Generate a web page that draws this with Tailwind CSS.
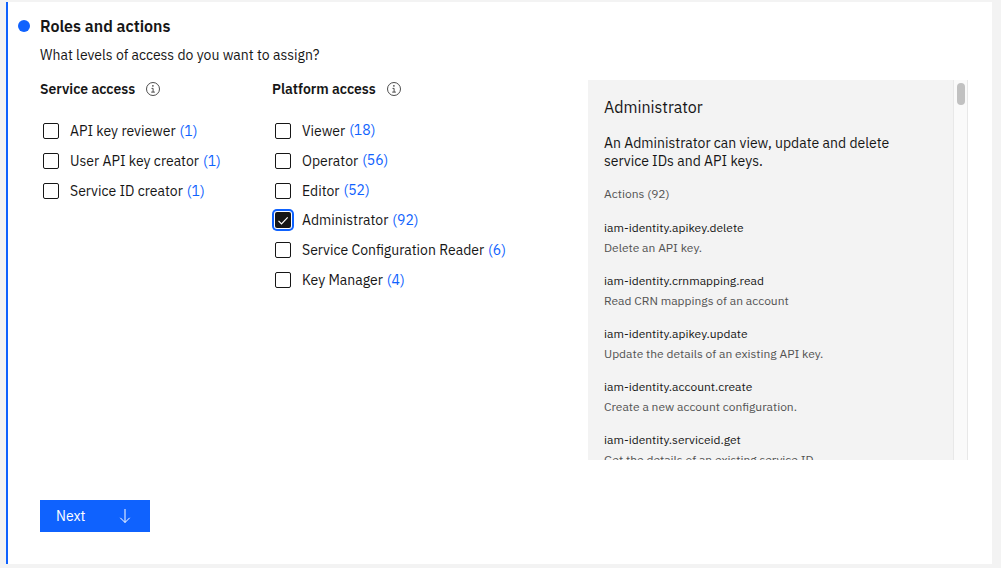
<!DOCTYPE html>
<html lang="en">
<head>
<meta charset="utf-8">
<meta name="viewport" content="width=device-width, initial-scale=1">
<title>Roles and actions</title>
<script src="https://cdn.jsdelivr.net/npm/@tailwindcss/browser@4"></script>
</head>
<body class="min-h-screen flex bg-[#f3f3f3] pt-[2px] pr-[9px] pb-1 pl-[6px] font-['IBM_Plex_Sans',Roboto,sans-serif] text-sm text-[#161616]">
<main class="flex-1 bg-white border-l-2 border-[#0f62fe] pl-8 pr-6 pt-3">
  <header>
    <div class="flex items-center gap-[10px] -ml-[22px]">
      <span class="size-3 rounded-full bg-[#0f62fe]"></span>
      <h1 class="text-base leading-6 font-semibold">Roles and actions</h1>
    </div>
    <p class="mt-[7px] leading-5">What levels of access do you want to assign?</p>
  </header>

  <div class="mt-[15px] grid grid-cols-[232fr_316fr_380fr] items-start">
    <section>
      <div class="flex items-center gap-[10px] h-[18px]">
        <h2 class="font-semibold">Service access</h2>
        <button type="button" aria-label="About service access" class="pb-px">
          <svg class="size-4 block" viewBox="0 0 16 16" fill="none" stroke="#393939" stroke-width="0.9"><circle cx="8" cy="8" r="6.500"/><path d="M6.500 7.400h1.600v3.700M6.200 11.100h3.700"/><circle cx="7.900" cy="4.900" r="0.800" fill="#393939" stroke="none"/></svg>
        </button>
      </div>
      <ul class="mt-[18px] h-[90px] grid auto-rows-fr pl-[3px]">
        <li class="flex items-center gap-1"><input id="s1" type="checkbox" class="appearance-none size-4 border border-[#161616] rounded-xs"><label for="s1" class="pl-[7px]">API key reviewer</label><a href="#" class="text-[#0f62fe] pb-px">(1)</a></li>
        <li class="flex items-center gap-1"><input id="s2" type="checkbox" class="appearance-none size-4 border border-[#161616] rounded-xs"><label for="s2" class="pl-[7px]">User API key creator</label><a href="#" class="text-[#0f62fe] pb-px">(1)</a></li>
        <li class="flex items-center gap-1"><input id="s3" type="checkbox" class="appearance-none size-4 border border-[#161616] rounded-xs"><label for="s3" class="pl-[7px]">Service ID creator</label><a href="#" class="text-[#0f62fe] pb-px">(1)</a></li>
      </ul>
    </section>

    <section>
      <div class="flex items-center gap-[10px] h-[18px]">
        <h2 class="font-semibold">Platform access</h2>
        <button type="button" aria-label="About platform access" class="pb-px">
          <svg class="size-4 block" viewBox="0 0 16 16" fill="none" stroke="#393939" stroke-width="0.9"><circle cx="8" cy="8" r="6.500"/><path d="M6.500 7.400h1.600v3.700M6.200 11.100h3.700"/><circle cx="7.900" cy="4.900" r="0.800" fill="#393939" stroke="none"/></svg>
        </button>
      </div>
      <ul class="mt-[18px] h-[179px] grid auto-rows-fr pl-[3px]">
        <li class="flex items-center gap-1"><input id="p1" type="checkbox" class="appearance-none size-4 border border-[#161616] rounded-xs"><label for="p1" class="pl-[7px]">Viewer</label><a href="#" class="text-[#0f62fe] pb-px">(18)</a></li>
        <li class="flex items-center gap-1"><input id="p2" type="checkbox" class="appearance-none size-4 border border-[#161616] rounded-xs"><label for="p2" class="pl-[7px]">Operator</label><a href="#" class="text-[#0f62fe] pb-px">(56)</a></li>
        <li class="flex items-center gap-1"><input id="p3" type="checkbox" class="appearance-none size-4 border border-[#161616] rounded-xs"><label for="p3" class="pl-[7px]">Editor</label><a href="#" class="text-[#0f62fe] pb-px">(52)</a></li>
        <li class="flex items-center gap-1">
          <span class="relative size-4">
            <input id="p4" type="checkbox" checked class="block appearance-none size-4 bg-[#161616] rounded-xs ring-2 ring-[#0f62fe] ring-offset-1">
            <svg class="absolute inset-0 size-4 pointer-events-none" viewBox="0 0 16 16" fill="none" stroke="#fff" stroke-width="1.2"><path d="M3.500 8.800l3 3 6.200-6.500"/></svg>
          </span>
          <label for="p4" class="pl-[7px]">Administrator</label><a href="#" class="text-[#0f62fe] pb-px">(92)</a></li>
        <li class="flex items-center gap-1"><input id="p5" type="checkbox" class="appearance-none size-4 border border-[#161616] rounded-xs"><label for="p5" class="pl-[7px]">Service Configuration Reader</label><a href="#" class="text-[#0f62fe] pb-px">(6)</a></li>
        <li class="flex items-center gap-1"><input id="p6" type="checkbox" class="appearance-none size-4 border border-[#161616] rounded-xs"><label for="p6" class="pl-[7px]">Key Manager</label><a href="#" class="text-[#0f62fe] pb-px">(4)</a></li>
      </ul>
    </section>

    <aside class="flex h-[380px] overflow-hidden bg-[#f3f3f3]">
      <div class="flex-1 px-4 pt-4">
        <h2 class="text-base leading-[22px]">Administrator</h2>
        <p class="mt-4 leading-[18px] max-w-[320px]">An Administrator can view, update and delete service IDs and API keys.</p>
        <p class="mt-4 text-xs leading-4 text-[#525252]">Actions (92)</p>
        <dl class="mt-4 grid gap-[13px] text-xs leading-5">
          <div><dt>iam-identity.apikey.delete</dt><dd class="text-[#525252]">Delete an API key.</dd></div>
          <div><dt>iam-identity.crnmapping.read</dt><dd class="text-[#525252]">Read CRN mappings of an account</dd></div>
          <div><dt>iam-identity.apikey.update</dt><dd class="text-[#525252]">Update the details of an existing API key.</dd></div>
          <div><dt>iam-identity.account.create</dt><dd class="text-[#525252]">Create a new account configuration.</dd></div>
          <div><dt>iam-identity.serviceid.get</dt><dd class="text-[#525252]">Get the details of an existing service ID.</dd></div>
        </dl>
      </div>
      <div class="w-[15px] bg-[#fafafa] border-x border-[#e8e8e8] pt-[3px] pl-[3px]">
        <div class="w-2 h-[22px] rounded-full bg-[#c1c1c1]"></div>
      </div>
    </aside>
  </div>

  <button type="button" class="mt-10 flex items-center justify-between w-[110px] h-8 pl-4 pr-[17px] bg-[#0f62fe] text-white">
    Next
    <svg class="size-4" viewBox="0 0 16 16" fill="none" stroke="#fff" stroke-width="1"><path d="M8 1v13.500M3.300 9.800l4.700 4.700 4.700-4.700"/></svg>
  </button>
</main>
</body>
</html>
